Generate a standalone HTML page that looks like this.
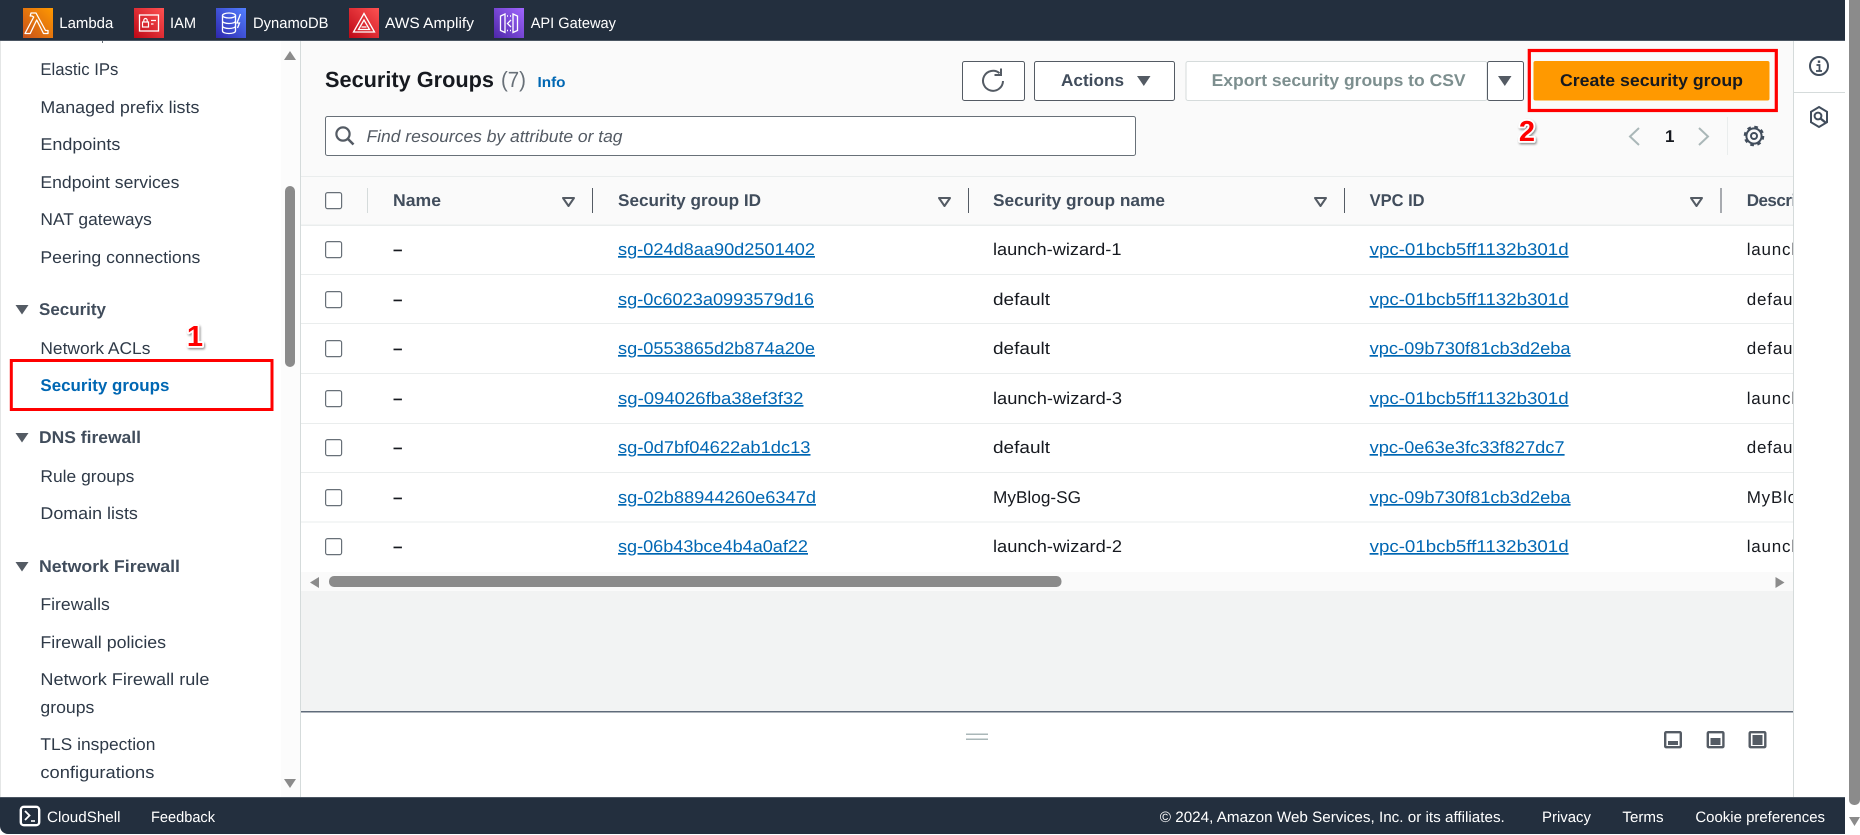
<!DOCTYPE html>
<html>
<head>
<meta charset="utf-8">
<title>Security Groups</title>
<style>
html,body{margin:0;padding:0;background:#fff;width:1860px;height:835px;overflow:hidden}
svg{display:block}
text{font-family:"Liberation Sans",sans-serif;text-rendering:geometricPrecision;white-space:pre}
.top{font-size:15px;fill:#fff}
.nav{font-size:17px;fill:#2f3a48}
.navh{font-size:17px;font-weight:bold;fill:#414d5c}
.th{font-size:17px;font-weight:bold;fill:#414d5c}
.td{font-size:17px;fill:#16191f}
.lk{font-size:17px;fill:#0067b3;text-decoration:underline}
.ft{font-size:15px;fill:#fff}
.num{font-size:29px;font-weight:bold;fill:#f00;stroke:#fff;stroke-width:3.5px;paint-order:stroke;stroke-linejoin:round;text-anchor:middle;filter:url(#sh)}
</style>
</head>
<body>
<svg width="1860" height="835" viewBox="0 0 1860 835" xmlns="http://www.w3.org/2000/svg">
<defs>
<linearGradient id="gO" x1="0" y1="1" x2="1" y2="0"><stop offset="0" stop-color="#c8511b"/><stop offset="1" stop-color="#ff9900"/></linearGradient>
<linearGradient id="gR" x1="0" y1="1" x2="1" y2="0"><stop offset="0" stop-color="#bd0816"/><stop offset="1" stop-color="#ff5252"/></linearGradient>
<linearGradient id="gB" x1="0" y1="1" x2="1" y2="0"><stop offset="0" stop-color="#2e27ad"/><stop offset="1" stop-color="#527fff"/></linearGradient>
<linearGradient id="gP" x1="0" y1="1" x2="1" y2="0"><stop offset="0" stop-color="#4d27a8"/><stop offset="1" stop-color="#a166ff"/></linearGradient>
<clipPath id="c1"><rect x="301" y="170" width="1492" height="410"/></clipPath>
<filter id="sh" x="-40%" y="-40%" width="200%" height="200%"><feDropShadow dx="1" dy="1.5" stdDeviation="1" flood-color="#000" flood-opacity=".45"/></filter>
</defs>

<!-- page base -->
<rect width="1860" height="835" fill="#fff"/>

<!-- main panel -->
<rect x="301" y="41" width="1492" height="135" fill="#fafafa"/>
<rect x="301" y="176" width="1492" height="49" fill="#fafafa"/>
<rect x="301" y="225" width="1492" height="347" fill="#fff"/>
<rect x="301" y="572" width="1492" height="19" fill="#fafafa"/>
<rect x="301" y="591" width="1492" height="120" fill="#f2f3f3"/>
<rect x="301" y="711" width="1492" height="1.5" fill="#5f6b7a"/>

<!-- dividers -->
<rect x="300" y="41" width="1" height="756" fill="#d5dbdb"/>
<rect x="1793" y="41" width="1" height="756" fill="#d5dbdb"/>
<rect x="1794" y="92" width="51" height="1" fill="#d5dbdb"/>
<rect x="0" y="41" width="1" height="756" fill="#e4e6e6"/>
<rect x="102" y="41" width="1" height="2" fill="#687078"/>

<!-- sidebar scrollbar -->
<rect x="281" y="41" width="19" height="756" fill="#fcfcfc"/>
<path d="M290 51l6 9h-12z" fill="#8b8b8b"/>
<rect x="285" y="186" width="10" height="181" rx="5" fill="#8b8b8b"/>
<path d="M290 788l-6-9h12z" fill="#8b8b8b"/>

<!-- sidebar -->
<text class="nav" x="40.4" y="75" textLength="78" lengthAdjust="spacingAndGlyphs">Elastic IPs</text>
<text class="nav" x="40.4" y="113" textLength="159" lengthAdjust="spacingAndGlyphs">Managed prefix lists</text>
<text class="nav" x="40.4" y="150" textLength="80" lengthAdjust="spacingAndGlyphs">Endpoints</text>
<text class="nav" x="40.4" y="188" textLength="139" lengthAdjust="spacingAndGlyphs">Endpoint services</text>
<text class="nav" x="40.4" y="225" textLength="111.5" lengthAdjust="spacingAndGlyphs">NAT gateways</text>
<text class="nav" x="40.4" y="263" textLength="160" lengthAdjust="spacingAndGlyphs">Peering connections</text>
<path d="M15.5 305h13l-6.5 9.5z" fill="#545b64"/>
<text class="navh" x="39" y="315" textLength="67" lengthAdjust="spacingAndGlyphs">Security</text>
<text class="nav" x="40.4" y="354" textLength="110" lengthAdjust="spacingAndGlyphs">Network ACLs</text>
<text class="navh" x="40.4" y="391" textLength="129" lengthAdjust="spacingAndGlyphs" style="fill:#0067b3">Security groups</text>
<path d="M15.5 433h13l-6.5 9.5z" fill="#545b64"/>
<text class="navh" x="39" y="443" textLength="102" lengthAdjust="spacingAndGlyphs">DNS firewall</text>
<text class="nav" x="40.4" y="482" textLength="94" lengthAdjust="spacingAndGlyphs">Rule groups</text>
<text class="nav" x="40.4" y="519" textLength="97.5" lengthAdjust="spacingAndGlyphs">Domain lists</text>
<path d="M15.5 562h13l-6.5 9.5z" fill="#545b64"/>
<text class="navh" x="39" y="572" textLength="141" lengthAdjust="spacingAndGlyphs">Network Firewall</text>
<text class="nav" x="40.4" y="610" textLength="69.4" lengthAdjust="spacingAndGlyphs">Firewalls</text>
<text class="nav" x="40.4" y="648" textLength="125.7" lengthAdjust="spacingAndGlyphs">Firewall policies</text>
<text class="nav" x="40.4" y="685" textLength="169" lengthAdjust="spacingAndGlyphs">Network Firewall rule</text>
<text class="nav" x="40.4" y="713" textLength="54" lengthAdjust="spacingAndGlyphs">groups</text>
<text class="nav" x="40.4" y="750" textLength="115" lengthAdjust="spacingAndGlyphs">TLS inspection</text>
<text class="nav" x="40.4" y="778" textLength="114" lengthAdjust="spacingAndGlyphs">configurations</text>

<!-- annotation 1 -->
<rect x="11.3" y="360.5" width="260.7" height="49" fill="none" stroke="#f00" stroke-width="3"/>
<text class="num" x="195" y="346">1</text>

<!-- header -->
<text x="325" y="87" textLength="169" lengthAdjust="spacingAndGlyphs" style="font-size:22px;font-weight:bold;fill:#16191f">Security Groups</text>
<text x="501" y="87" textLength="25" lengthAdjust="spacingAndGlyphs" style="font-size:22px;fill:#687078">(7)</text>
<text x="537.5" y="87" textLength="28" lengthAdjust="spacingAndGlyphs" style="font-size:14.5px;font-weight:bold;fill:#0067b3">Info</text>

<!-- refresh button -->
<rect x="962.5" y="61.5" width="62" height="39" rx="2" fill="#fff" stroke="#545b64"/>
<path d="M999.5 73.2A10 10 0 1 0 1003 81" fill="none" stroke="#545b64" stroke-width="2"/>
<path d="M1001 68.5v6.5h-6.5" fill="none" stroke="#545b64" stroke-width="2"/>

<!-- actions button -->
<rect x="1034.5" y="61.5" width="140" height="39" rx="2" fill="#fff" stroke="#545b64"/>
<text x="1061" y="86" textLength="63" lengthAdjust="spacingAndGlyphs" style="font-size:17px;font-weight:bold;fill:#414d5c">Actions</text>
<path d="M1137 76h13.5l-6.7 10z" fill="#545b64"/>

<!-- export -->
<rect x="1186" y="61.5" width="301" height="39" rx="2" fill="#fff" stroke="#d5dbdb"/>
<text x="1211.6" y="86" textLength="254" lengthAdjust="spacingAndGlyphs" style="font-size:17px;font-weight:bold;fill:#7d8f8f">Export security groups to CSV</text>
<rect x="1487.5" y="61.5" width="36" height="39" rx="2" fill="#fff" stroke="#545b64"/>
<path d="M1498 76h13.5l-6.7 10z" fill="#545b64"/>

<!-- create -->
<rect x="1533.5" y="61" width="236" height="39.5" rx="2" fill="#ff9900"/>
<text x="1560" y="86" textLength="183" lengthAdjust="spacingAndGlyphs" style="font-size:17px;font-weight:bold;fill:#16191f">Create security group</text>
<rect x="1529.3" y="50.5" width="247" height="60" fill="none" stroke="#f00" stroke-width="3.2"/>
<text class="num" x="1527" y="141">2</text>

<!-- search -->
<rect x="325.5" y="116.5" width="810" height="39" rx="2" fill="#fff" stroke="#687078"/>
<circle cx="343" cy="134" r="6.6" fill="none" stroke="#545b64" stroke-width="2.2"/>
<path d="M348 139l5.5 5.5" stroke="#545b64" stroke-width="2.6" fill="none"/>
<text x="366.5" y="142" textLength="256" lengthAdjust="spacingAndGlyphs" style="font-size:17px;font-style:italic;fill:#545b64">Find resources by attribute or tag</text>

<!-- pagination -->
<path d="M1639 128l-9 8.5 9 8.5" fill="none" stroke="#aab7b8" stroke-width="2"/>
<text x="1665" y="142" style="font-size:17px;font-weight:bold;fill:#16191f">1</text>
<path d="M1699 128l9 8.5-9 8.5" fill="none" stroke="#aab7b8" stroke-width="2"/>
<rect x="1727" y="117" width="1" height="38" fill="#eaeded"/>
<circle cx="1754" cy="136" r="7.6" fill="none" stroke="#414d5c" stroke-width="2"/>
<circle cx="1754" cy="136" r="9" fill="none" stroke="#414d5c" stroke-width="2.6" stroke-dasharray="3.6 3.47"/>
<circle cx="1754" cy="136" r="3" fill="none" stroke="#414d5c" stroke-width="2"/>

<!-- right panel icons -->
<circle cx="1819" cy="66" r="9" fill="none" stroke="#414d5c" stroke-width="2"/>
<rect x="1817.8" y="60.5" width="2.4" height="2.4" fill="#414d5c"/>
<path d="M1816.5 65h3v5.5M1816 71h6" fill="none" stroke="#414d5c" stroke-width="1.8"/>
<path d="M1819 107l8 4.8v10.4l-8 4.8-8-4.8v-10.4z" fill="none" stroke="#414d5c" stroke-width="2"/>
<circle cx="1818" cy="116" r="3.4" fill="none" stroke="#414d5c" stroke-width="2"/>
<path d="M1820.5 118.5l5 4" stroke="#414d5c" stroke-width="2.4" fill="none"/>

<!-- table -->
<rect x="301" y="176" width="1492" height="1" fill="#eaeded"/>
<rect x="301" y="224.5" width="1492" height="1.5" fill="#eaeded"/>
<rect x="301" y="274" width="1492" height="1" fill="#eaeded"/>
<rect x="301" y="323" width="1492" height="1" fill="#eaeded"/>
<rect x="301" y="373" width="1492" height="1" fill="#eaeded"/>
<rect x="301" y="423" width="1492" height="1" fill="#eaeded"/>
<rect x="301" y="472" width="1492" height="1" fill="#eaeded"/>
<rect x="301" y="521.5" width="1492" height="1" fill="#eaeded"/>

<g fill="#fff" stroke="#687078" stroke-width="1.2">
<rect x="325.6" y="192.6" width="16" height="16" rx="2"/>
<rect x="325.6" y="241.6" width="16" height="16" rx="2"/>
<rect x="325.6" y="291.6" width="16" height="16" rx="2"/>
<rect x="325.6" y="340.6" width="16" height="16" rx="2"/>
<rect x="325.6" y="390.6" width="16" height="16" rx="2"/>
<rect x="325.6" y="439.6" width="16" height="16" rx="2"/>
<rect x="325.6" y="489.6" width="16" height="16" rx="2"/>
<rect x="325.6" y="538.6" width="16" height="16" rx="2"/>
</g>

<rect x="367" y="188" width="1" height="25" fill="#d5dbdb"/>
<rect x="592" y="188" width="1" height="25" fill="#545b64"/>
<rect x="968" y="188" width="1" height="25" fill="#545b64"/>
<rect x="1344" y="188" width="1" height="25" fill="#545b64"/>
<rect x="1720.5" y="188" width="1" height="25" fill="#545b64"/>

<g fill="none" stroke="#545b64" stroke-width="2" stroke-linejoin="round">
<path d="M563 198h11l-5.5 8z"/>
<path d="M939 198h11l-5.5 8z"/>
<path d="M1315 198h11l-5.5 8z"/>
<path d="M1691 198h11l-5.5 8z"/>
</g>

<g clip-path="url(#c1)">
<text class="th" x="393" y="206" textLength="48" lengthAdjust="spacingAndGlyphs">Name</text>
<text class="th" x="618" y="206" textLength="143" lengthAdjust="spacingAndGlyphs">Security group ID</text>
<text class="th" x="993" y="206" textLength="172" lengthAdjust="spacingAndGlyphs">Security group name</text>
<text class="th" x="1369.6" y="206" textLength="55" lengthAdjust="spacingAndGlyphs">VPC ID</text>
<text class="th" x="1746.7" y="206" style="letter-spacing:-.5px">Description</text>

<text class="td" x="393" y="255" style="font-weight:bold">–</text>
<text class="td" x="393" y="305" style="font-weight:bold">–</text>
<text class="td" x="393" y="354" style="font-weight:bold">–</text>
<text class="td" x="393" y="404" style="font-weight:bold">–</text>
<text class="td" x="393" y="453" style="font-weight:bold">–</text>
<text class="td" x="393" y="503" style="font-weight:bold">–</text>
<text class="td" x="393" y="552" style="font-weight:bold">–</text>

<text class="lk" x="618" y="255" textLength="197" lengthAdjust="spacingAndGlyphs">sg-024d8aa90d2501402</text>
<text class="lk" x="618" y="305" textLength="196" lengthAdjust="spacingAndGlyphs">sg-0c6023a0993579d16</text>
<text class="lk" x="618" y="354" textLength="197" lengthAdjust="spacingAndGlyphs">sg-0553865d2b874a20e</text>
<text class="lk" x="618" y="404" textLength="185.5" lengthAdjust="spacingAndGlyphs">sg-094026fba38ef3f32</text>
<text class="lk" x="618" y="453" textLength="192.5" lengthAdjust="spacingAndGlyphs">sg-0d7bf04622ab1dc13</text>
<text class="lk" x="618" y="503" textLength="198" lengthAdjust="spacingAndGlyphs">sg-02b88944260e6347d</text>
<text class="lk" x="618" y="552" textLength="190" lengthAdjust="spacingAndGlyphs">sg-06b43bce4b4a0af22</text>

<text class="td" x="993" y="255" textLength="128.5" lengthAdjust="spacingAndGlyphs">launch-wizard-1</text>
<text class="td" x="993" y="305" textLength="57" lengthAdjust="spacingAndGlyphs">default</text>
<text class="td" x="993" y="354" textLength="57" lengthAdjust="spacingAndGlyphs">default</text>
<text class="td" x="993" y="404" textLength="129" lengthAdjust="spacingAndGlyphs">launch-wizard-3</text>
<text class="td" x="993" y="453" textLength="57" lengthAdjust="spacingAndGlyphs">default</text>
<text class="td" x="993" y="503" textLength="88" lengthAdjust="spacingAndGlyphs">MyBlog-SG</text>
<text class="td" x="993" y="552" textLength="129" lengthAdjust="spacingAndGlyphs">launch-wizard-2</text>

<text class="lk" x="1369.6" y="255" textLength="199" lengthAdjust="spacingAndGlyphs">vpc-01bcb5ff1132b301d</text>
<text class="lk" x="1369.6" y="305" textLength="199" lengthAdjust="spacingAndGlyphs">vpc-01bcb5ff1132b301d</text>
<text class="lk" x="1369.6" y="354" textLength="201" lengthAdjust="spacingAndGlyphs">vpc-09b730f81cb3d2eba</text>
<text class="lk" x="1369.6" y="404" textLength="199" lengthAdjust="spacingAndGlyphs">vpc-01bcb5ff1132b301d</text>
<text class="lk" x="1369.6" y="453" textLength="195" lengthAdjust="spacingAndGlyphs">vpc-0e63e3fc33f827dc7</text>
<text class="lk" x="1369.6" y="503" textLength="201" lengthAdjust="spacingAndGlyphs">vpc-09b730f81cb3d2eba</text>
<text class="lk" x="1369.6" y="552" textLength="199" lengthAdjust="spacingAndGlyphs">vpc-01bcb5ff1132b301d</text>

<text class="td" x="1746.7" y="255" style="letter-spacing:.8px">launch-wizard-1</text>
<text class="td" x="1746.7" y="305" style="letter-spacing:.8px">default VPC</text>
<text class="td" x="1746.7" y="354" style="letter-spacing:.8px">default VPC</text>
<text class="td" x="1746.7" y="404" style="letter-spacing:.8px">launch-wizard-3</text>
<text class="td" x="1746.7" y="453" style="letter-spacing:.8px">default VPC</text>
<text class="td" x="1746.7" y="503" style="letter-spacing:.8px">MyBlog-SG</text>
<text class="td" x="1746.7" y="552" style="letter-spacing:.8px">launch-wizard-2</text>
</g>

<!-- horizontal scrollbar -->
<path d="M310 582.5l9-5.5v11z" fill="#8b8b8b"/>
<rect x="329" y="576" width="732.5" height="11" rx="5" fill="#8b8b8b"/>
<path d="M1784.5 582.5l-9-5.5v11z" fill="#8b8b8b"/>

<!-- split panel bar -->
<rect x="966" y="733.5" width="22" height="1.5" fill="#aab7b8"/>
<rect x="966" y="738.5" width="22" height="1.5" fill="#aab7b8"/>
<g fill="#fff" stroke="#545b64" stroke-width="2.4">
<rect x="1665.2" y="732.2" width="15.6" height="15" rx="1"/>
<rect x="1707.8" y="732.2" width="15.6" height="15" rx="1"/>
<rect x="1749.7" y="732.2" width="15.6" height="15" rx="1"/>
</g>
<rect x="1668" y="741" width="10" height="4" fill="#545b64"/>
<rect x="1710.5" y="738" width="10" height="7" fill="#545b64"/>
<rect x="1752.5" y="735" width="10" height="10" fill="#545b64"/>

<!-- top bar -->
<rect x="0" y="0" width="1845" height="40" fill="#232f3e"/>
<rect x="0" y="40" width="1845" height="1" fill="#4a5562"/>

<rect x="23" y="8" width="30" height="30" fill="url(#gO)"/>
<path d="M31 13h5l9.5 17.5h2.500v3h-4.500l-6.800-13.500-6.500 13.500h-5.200l8.700-16.500-1.700-1h-1.800z" fill="none" stroke="#fff" stroke-width="1.3" stroke-linejoin="round"/>
<text class="top" x="59.3" y="28" textLength="54" lengthAdjust="spacingAndGlyphs">Lambda</text>

<rect x="134" y="8" width="30" height="30" fill="url(#gR)"/>
<rect x="139.5" y="15" width="19" height="16" fill="none" stroke="#fff" stroke-width="1.3"/>
<rect x="142.5" y="22" width="6" height="5" fill="none" stroke="#fff" stroke-width="1.2"/>
<path d="M143.8 22v-1.800a1.700 1.700 0 0 1 3.400 0v1.800M151 20.500h5M151 24h2.500" fill="none" stroke="#fff" stroke-width="1.2"/>
<text class="top" x="170" y="28" textLength="26" lengthAdjust="spacingAndGlyphs">IAM</text>

<rect x="216" y="8" width="30" height="30" fill="url(#gB)"/>
<g fill="none" stroke="#fff" stroke-width="1.3">
<ellipse cx="229" cy="15.5" rx="6.5" ry="2.5"/>
<path d="M222.5 15.5v15.5c0 1.500 3 2.500 6.500 2.500s6.500-1 6.500-2.500v-15.500M222.500 21c0 1.400 3 2.500 6.500 2.500s6.500-1 6.500-2.500M222.500 26c0 1.400 3 2.500 6.500 2.500s6.500-1 6.500-2.500"/>
<path d="M240.5 14l-3.500 9h2.500l-2 5"/>
</g>
<text class="top" x="253" y="28" textLength="75.5" lengthAdjust="spacingAndGlyphs">DynamoDB</text>

<rect x="349" y="8" width="30" height="30" fill="url(#gR)"/>
<path d="M364 13.5l10.5 18.500h-21zM364 20l-5.500 9.500h11zM361.500 27h5" fill="none" stroke="#fff" stroke-width="1.3"/>
<text class="top" x="385" y="28" textLength="89" lengthAdjust="spacingAndGlyphs">AWS Amplify</text>

<rect x="494" y="8" width="30" height="30" fill="url(#gP)"/>
<g fill="none" stroke="#fff" stroke-width="1.3">
<path d="M505 14l-4.500 2v14.500l4.500 2zM513 14l4.500 2v14.500l-4.500 2z"/>
<path d="M507 16h1M510 16h1M507 30.500h1M510 30.500h1" stroke-width="1.5"/>
<path d="M511 20l-3.500 3.500 3.500 3.500"/>
</g>
<text class="top" x="530.7" y="28" textLength="85.3" lengthAdjust="spacingAndGlyphs">API Gateway</text>

<!-- bottom bar -->
<path d="M0 797h1845v37h-1837a8 8 0 0 1-8-8z" fill="#232f3e"/>
<rect x="0" y="797" width="1845" height="1" fill="#4a5562"/>
<rect x="20.8" y="806.8" width="18.4" height="18.4" rx="3" fill="#232f3e" stroke="#fff" stroke-width="2.4"/>
<path d="M25 811l4.500 4.500-4.500 4.500" fill="none" stroke="#fff" stroke-width="1.8"/>
<path d="M31 821h4" fill="none" stroke="#fff" stroke-width="1.6"/>
<text class="ft" x="47" y="822" textLength="73.5" lengthAdjust="spacingAndGlyphs">CloudShell</text>
<text class="ft" x="151" y="822" textLength="64" lengthAdjust="spacingAndGlyphs">Feedback</text>
<text class="ft" x="1159.8" y="822" textLength="345" lengthAdjust="spacingAndGlyphs">© 2024, Amazon Web Services, Inc. or its affiliates.</text>
<text class="ft" x="1542" y="822" textLength="49" lengthAdjust="spacingAndGlyphs">Privacy</text>
<text class="ft" x="1622.4" y="822" textLength="41.2" lengthAdjust="spacingAndGlyphs">Terms</text>
<text class="ft" x="1695.4" y="822" textLength="129.6" lengthAdjust="spacingAndGlyphs">Cookie preferences</text>

<!-- page scrollbar -->
<path d="M1849 0h11v800a5 5 0 0 1-5 5h-1a5 5 0 0 1-5-5z" fill="#8b8b8b"/>
<path d="M1854.5 826l-5.500-9h11z" fill="#8b8b8b"/>
</svg>
</body>
</html>
